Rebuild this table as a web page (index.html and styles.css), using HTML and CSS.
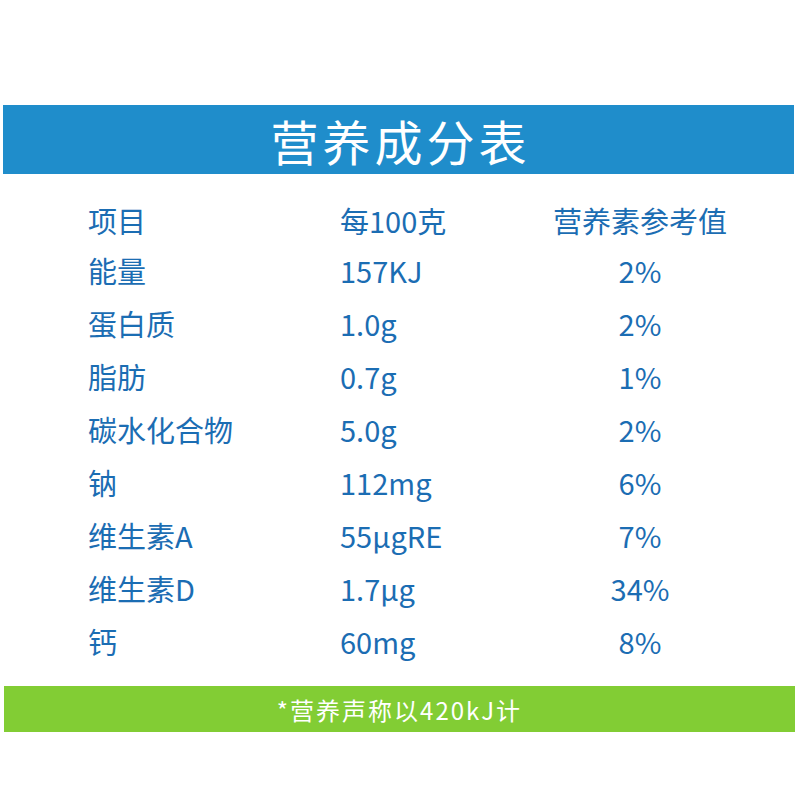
FILE: index.html
```html
<!DOCTYPE html>
<html lang="zh-CN">
<head>
<meta charset="utf-8">
<title>营养成分表</title>
<link rel="stylesheet" href="styles.css">
</head>
<body>
<div class="page">
  <header class="title-bar"><h1 class="title">营养成分表</h1></header>
  <div class="table">
    <div class="row head"><span class="c1">项目</span><span class="c2">每100克</span><span class="c3">营养素参考值</span></div>
    <div class="row"><span class="c1">能量</span><span class="c2">157KJ</span><span class="c3">2%</span></div>
    <div class="row"><span class="c1">蛋白质</span><span class="c2">1.0g</span><span class="c3">2%</span></div>
    <div class="row"><span class="c1">脂肪</span><span class="c2">0.7g</span><span class="c3">1%</span></div>
    <div class="row"><span class="c1">碳水化合物</span><span class="c2">5.0g</span><span class="c3">2%</span></div>
    <div class="row"><span class="c1">钠</span><span class="c2">112mg</span><span class="c3">6%</span></div>
    <div class="row"><span class="c1">维生素A</span><span class="c2">55μgRE</span><span class="c3">7%</span></div>
    <div class="row"><span class="c1">维生素D</span><span class="c2">1.7μg</span><span class="c3">34%</span></div>
    <div class="row"><span class="c1">钙</span><span class="c2">60mg</span><span class="c3">8%</span></div>
  </div>
  <footer class="note">*营养声称以420kJ计</footer>
</div>
</body>
</html>
```
FILE: styles.css
```css
html, body {
  margin: 0;
  padding: 0;
  background: #ffffff;
}
body {
  font-family: "Noto Sans CJK SC", "Noto Sans", sans-serif;
  width: 800px;
  height: 800px;
  overflow: hidden;
}
.page {
  padding-top: 105px;
}
.title-bar {
  margin: 0 6px 0 3px;
  height: 69px;
  background: #1f8dcb;
  display: flex;
  align-items: center;
  justify-content: center;
}
.title {
  margin: 0;
  font-size: 48px;
  font-weight: 400;
  color: #ffffff;
  letter-spacing: 4px;
  line-height: 1;
  padding-left: 4px;
}
.table {
  padding: 22px 0 0 88px;
  color: #1b6db3;
  font-size: 29px;
}
.row {
  display: grid;
  grid-template-columns: 252px 200px 200px;
  height: 53px;
  align-items: center;
  line-height: 1;
}
.row.head {
  height: 48px;
}
.c3 {
  text-align: center;
}
.note {
  margin: 18px 5px 0 4px;
  height: 46px;
  background: #82cd34;
  color: #ffffff;
  font-size: 24px;
  letter-spacing: 2px;
  display: flex;
  align-items: center;
  justify-content: center;
}
```
